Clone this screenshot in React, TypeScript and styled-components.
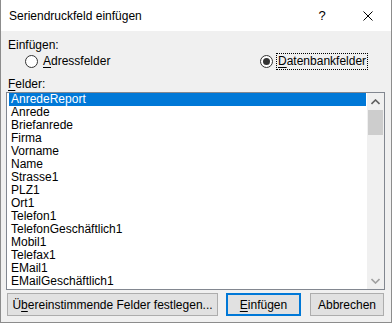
import styled, { createGlobalStyle } from 'styled-components'

const GlobalStyle = createGlobalStyle`
  html, body {
    margin: 0;
    padding: 0;
    background: #ffffff;
  }
  body {
    font-family: "Liberation Sans", Arial, sans-serif;
    font-size: 12px;
    color: #000000;
  }
`

const Window = styled.div`
  width: 392px;
  height: 323px;
  box-sizing: border-box;
  border: 1px solid #8c8c8c;
  border-top: none;
  display: flex;
  flex-direction: column;
  background: #f0f0f0;
`

const TitleBar = styled.div`
  height: 31px;
  background: #ffffff;
  display: flex;
  align-items: center;
  padding-left: 8px;
`

const Title = styled.div`
  flex: 1;
  font-size: 12px;
`

const TitleButton = styled.div`
  width: 46px;
  height: 31px;
  display: flex;
  align-items: center;
  justify-content: center;
  font-size: 13px;
`

const Body = styled.div`
  flex: 1;
  display: flex;
  flex-direction: column;
  padding: 0 6px 6px 5px;
`

const GroupLabel = styled.div<{ $top: number }>`
  margin-top: ${p => p.$top}px;
  margin-left: 2px;
  line-height: 15px;
  height: 15px;
`

const RadioRow = styled.div`
  display: grid;
  grid-template-columns: 235px 1fr;
  height: 17px;
  padding-left: 19px;
  box-sizing: border-box;
`

const RadioOption = styled.label`
  display: flex;
  align-items: center;
`

const RadioCircle = styled.span<{ $checked: boolean }>`
  width: 13px;
  height: 13px;
  box-sizing: border-box;
  border-radius: 50%;
  border: 1px solid #333333;
  background: #ffffff;
  display: flex;
  align-items: center;
  justify-content: center;
  margin-right: 3px;
  &::after {
    content: '';
    display: ${p => (p.$checked ? 'block' : 'none')};
    width: 7px;
    height: 7px;
    border-radius: 50%;
    background: #333333;
  }
`

const RadioText = styled.span<{ $focused: boolean }>`
  padding: 0 1px;
  line-height: 15px;
  border: 1px dotted ${p => (p.$focused ? '#000000' : 'transparent')};
`

const Key = styled.span`
  text-decoration: underline;
  text-underline-offset: 2px;
`

const ListBox = styled.div`
  height: 198px;
  box-sizing: border-box;
  border: 1px solid #828790;
  background: #ffffff;
  display: flex;
`

const Items = styled.div`
  flex: 1;
  padding: 0 1px 0 2px;
  overflow: hidden;
`

const Item = styled.div<{ $selected: boolean }>`
  height: 13px;
  line-height: 13px;
  padding-left: 2px;
  background: ${p => (p.$selected ? '#0078d7' : 'transparent')};
  color: ${p => (p.$selected ? '#ffffff' : '#000000')};
  white-space: nowrap;
`

const Scrollbar = styled.div`
  width: 17px;
  background: #f0f0f0;
  display: flex;
  flex-direction: column;
`

const ArrowBox = styled.div`
  height: 17px;
  display: flex;
  align-items: center;
  justify-content: center;
`

const Thumb = styled.div`
  height: 25px;
  margin: 0 1px;
  background: #cdcdcd;
`

const Track = styled.div`
  flex: 1;
`

const ButtonRow = styled.div`
  display: flex;
  margin-top: 3px;
  padding-left: 1px;
`

const Button = styled.div<{ $width: number; $gap: number; $default?: boolean }>`
  width: ${p => p.$width}px;
  height: 23px;
  margin-left: ${p => p.$gap}px;
  box-sizing: border-box;
  background: #e1e1e1;
  border: ${p => (p.$default ? '2px solid #0078d7' : '1px solid #adadad')};
  display: flex;
  align-items: center;
  justify-content: center;
  white-space: nowrap;
`

const fields = [
  'AnredeReport',
  'Anrede',
  'Briefanrede',
  'Firma',
  'Vorname',
  'Name',
  'Strasse1',
  'PLZ1',
  'Ort1',
  'Telefon1',
  'TelefonGeschäftlich1',
  'Mobil1',
  'Telefax1',
  'EMail1',
  'EMailGeschäftlich1',
]

function App() {
  return (
    <>
      <GlobalStyle />
      <Window>
        <TitleBar>
          <Title>Seriendruckfeld einfügen</Title>
          <TitleButton>?</TitleButton>
          <TitleButton>
            <svg width="10" height="10" viewBox="0 0 10 10">
              <path d="M0.5 0.5 L9.5 9.5 M9.5 0.5 L0.5 9.5" stroke="#000" strokeWidth="1" />
            </svg>
          </TitleButton>
        </TitleBar>
        <Body>
          <GroupLabel $top={7}>Einfügen:</GroupLabel>
          <RadioRow>
            <RadioOption>
              <RadioCircle $checked={false} />
              <RadioText $focused={false}><Key>A</Key>dressfelder</RadioText>
            </RadioOption>
            <RadioOption>
              <RadioCircle $checked={true} />
              <RadioText $focused={true}><Key>D</Key>atenbankfelder</RadioText>
            </RadioOption>
          </RadioRow>
          <GroupLabel $top={7}><Key>F</Key>elder:</GroupLabel>
          <ListBox>
            <Items>
              {fields.map((f, i) => (
                <Item key={f} $selected={i === 0}>{f}</Item>
              ))}
            </Items>
            <Scrollbar>
              <ArrowBox>
                <svg width="9" height="6" viewBox="0 0 9 6">
                  <path d="M0.5 5 L4.5 1 L8.5 5" stroke="#606060" strokeWidth="1.6" fill="none" />
                </svg>
              </ArrowBox>
              <Thumb />
              <Track />
              <ArrowBox>
                <svg width="9" height="6" viewBox="0 0 9 6">
                  <path d="M0.5 1 L4.5 5 L8.5 1" stroke="#a0a0a0" strokeWidth="1.6" fill="none" />
                </svg>
              </ArrowBox>
            </Scrollbar>
          </ListBox>
          <ButtonRow>
            <Button $width={211} $gap={0}>Ü<Key>b</Key>ereinstimmende Felder festlegen...</Button>
            <Button $width={75} $gap={8} $default><Key>E</Key>infügen</Button>
            <Button $width={74} $gap={9}>Abbrechen</Button>
          </ButtonRow>
        </Body>
      </Window>
    </>
  )
}

export default App
